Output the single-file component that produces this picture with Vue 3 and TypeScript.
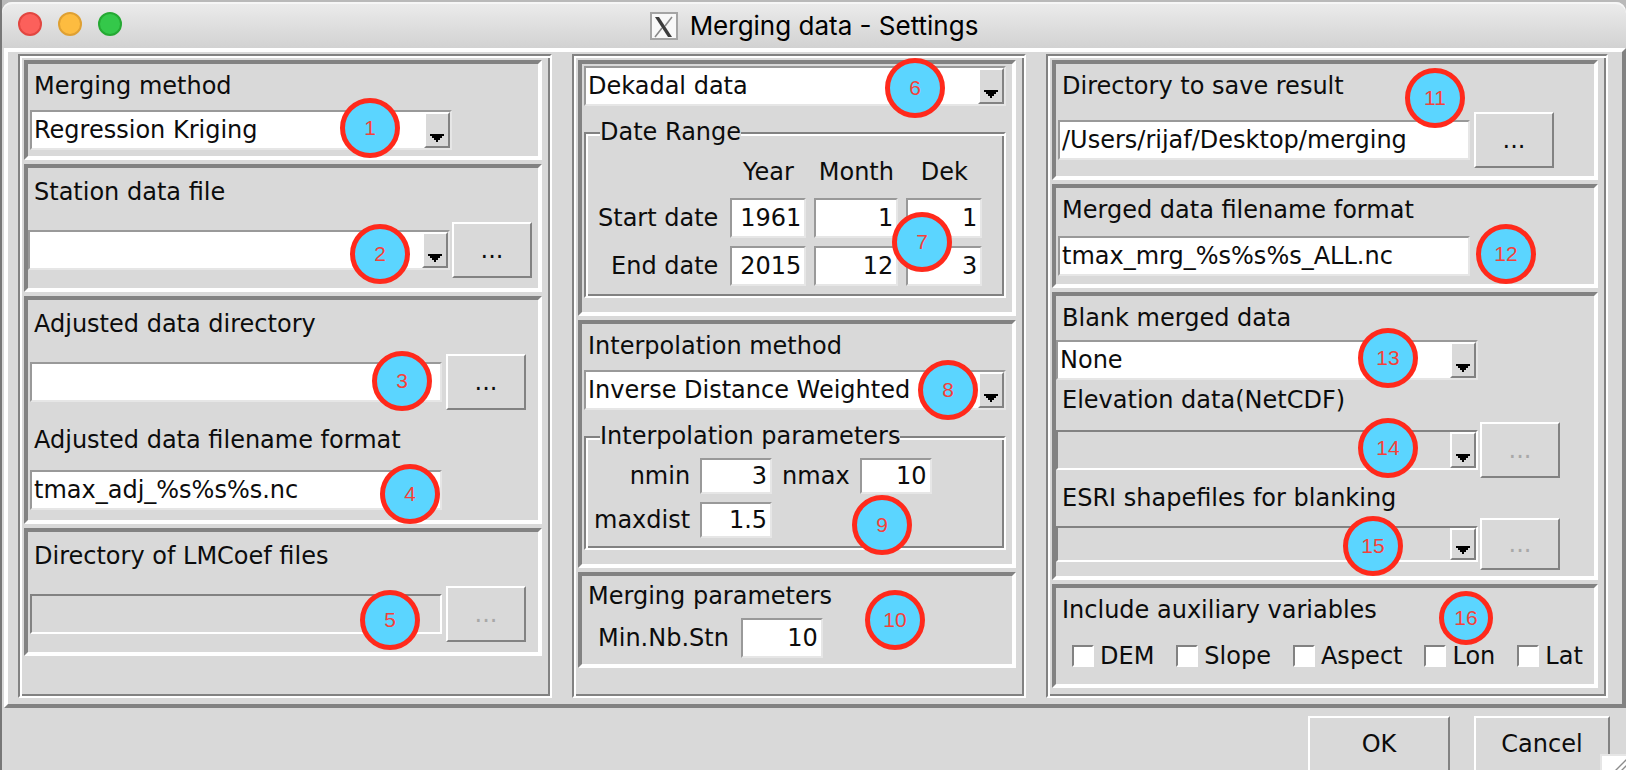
<script setup lang="ts">
import { ref } from 'vue'

interface Marker {
  n: number
  x: number
  y: number
  size?: number
}

const baseWidth = 1626
const mergingMethod = ref('Regression Kriging')
const stationFile = ref('')
const adjustedDir = ref('')
const adjustedFormat = ref('tmax_adj_%s%s%s.nc')
const coefDir = ref('')
const timeStep = ref('Dekadal data')
const interpolation = ref('Inverse Distance Weighted')
const nmin = ref('3')
const nmax = ref('10')
const maxdist = ref('1.5')
const minStations = ref('10')
const resultDir = ref('/Users/rijaf/Desktop/merging')
const mergedFormat = ref('tmax_mrg_%s%s%s_ALL.nc')
const blank = ref('None')

const dates = ref([
  { id: 'start', label: 'Start date', year: '1961', month: '1', dek: '1' },
  { id: 'end', label: 'End date', year: '2015', month: '12', dek: '3' },
])

const auxiliary = ref([
  { name: 'DEM', on: false },
  { name: 'Slope', on: false },
  { name: 'Aspect', on: false },
  { name: 'Lon', on: false },
  { name: 'Lat', on: false },
])

const markers: Marker[] = [
  { n: 1, x: 370, y: 128 },
  { n: 2, x: 380, y: 254 },
  { n: 3, x: 402, y: 381 },
  { n: 4, x: 410, y: 494 },
  { n: 5, x: 390, y: 620 },
  { n: 6, x: 915, y: 88 },
  { n: 7, x: 922, y: 242 },
  { n: 8, x: 948, y: 390 },
  { n: 9, x: 882, y: 525 },
  { n: 10, x: 895, y: 620 },
  { n: 11, x: 1435, y: 98 },
  { n: 12, x: 1506, y: 254 },
  { n: 13, x: 1388, y: 358 },
  { n: 14, x: 1388, y: 448 },
  { n: 15, x: 1373, y: 546 },
  { n: 16, x: 1466, y: 618, size: 54 },
]

const markerStyle = (m: Marker) => ({
  left: `${(m.x / baseWidth) * 100}%`,
  top: `${m.y}px`,
  width: `${m.size ?? 60}px`,
  height: `${m.size ?? 60}px`,
})
</script>

<template>
  <div class="desktop">
    <div class="window">
      <header class="titlebar">
        <div class="lights">
          <button class="light close" type="button" aria-label="Close"></button>
          <button class="light minimize" type="button" aria-label="Minimize"></button>
          <button class="light zoom" type="button" aria-label="Zoom"></button>
        </div>
        <h1 class="title">
          <svg class="x-icon" viewBox="0 0 28 28" aria-hidden="true">
            <rect x="1" y="1" width="26" height="26" fill="#f8f8f8" stroke="#a4a4a4" stroke-width="2" />
            <path d="M22 5 L15 14 M12 16 L5 25" stroke="#8a8a8a" stroke-width="1.6" fill="none" />
            <path d="M5 5 H9 L22 25 H18 Z" fill="#3c3c3c" />
          </svg>
          <span>Merging data - Settings</span>
        </h1>
      </header>

      <main class="body">
        <section class="column">
          <div class="panel p-combo">
            <label class="caption" for="merging-method">Merging method</label>
            <div class="combo">
              <select id="merging-method" v-model="mergingMethod">
                <option>Regression Kriging</option>
              </select>
              <span class="arrow"><svg viewBox="0 0 14 8"><path d="M0 0H14V2H12V4H10V6H8V8H6V6H4V4H2V2H0Z" /></svg></span>
            </div>
          </div>

          <div class="panel p-file">
            <label class="caption" for="station-file">Station data file</label>
            <div class="row tight end-6">
              <div class="combo">
                <select id="station-file" v-model="stationFile"><option value=""></option></select>
                <span class="arrow"><svg viewBox="0 0 14 8"><path d="M0 0H14V2H12V4H10V6H8V8H6V6H4V4H2V2H0Z" /></svg></span>
              </div>
              <button class="browse" type="button" aria-label="Browse station data file">...</button>
            </div>
          </div>

          <div class="panel p-file">
            <label class="caption" for="adjusted-dir">Adjusted data directory</label>
            <div class="row inset-2 end-12">
              <input id="adjusted-dir" v-model="adjustedDir" class="entry" type="text" />
              <button class="browse" type="button" aria-label="Browse adjusted data directory">...</button>
            </div>
            <label class="caption second" for="adjusted-format">Adjusted data filename format</label>
            <div class="row inset-2 end-96">
              <input id="adjusted-format" v-model="adjustedFormat" class="entry" type="text" />
            </div>
          </div>

          <div class="panel p-file">
            <label class="caption" for="coef-dir">Directory of LMCoef files</label>
            <div class="row inset-2 end-12">
              <input id="coef-dir" v-model="coefDir" class="entry" type="text" disabled />
              <button class="browse" type="button" disabled aria-label="Browse LMCoef directory">...</button>
            </div>
          </div>
        </section>

        <section class="column">
          <div class="panel p-dates">
            <div class="combo full">
              <select v-model="timeStep" aria-label="Time step"><option>Dekadal data</option></select>
              <span class="arrow"><svg viewBox="0 0 14 8"><path d="M0 0H14V2H12V4H10V6H8V8H6V6H4V4H2V2H0Z" /></svg></span>
            </div>
            <fieldset class="group">
              <legend>Date Range</legend>
              <table class="dates">
                <thead>
                  <tr>
                    <td></td>
                    <th scope="col">Year</th>
                    <th scope="col">Month</th>
                    <th scope="col">Dek</th>
                  </tr>
                </thead>
                <tbody>
                  <tr v-for="d in dates" :key="d.id">
                    <th scope="row">{{ d.label }}</th>
                    <td><input v-model="d.year" class="entry num w-76" type="text" :aria-label="`${d.label} year`" /></td>
                    <td><input v-model="d.month" class="entry num w-84" type="text" :aria-label="`${d.label} month`" /></td>
                    <td><input v-model="d.dek" class="entry num w-76" type="text" :aria-label="`${d.label} dek`" /></td>
                  </tr>
                </tbody>
              </table>
            </fieldset>
          </div>

          <div class="panel p-interp">
            <label class="caption" for="interpolation">Interpolation method</label>
            <div class="combo full">
              <select id="interpolation" v-model="interpolation"><option>Inverse Distance Weighted</option></select>
              <span class="arrow"><svg viewBox="0 0 14 8"><path d="M0 0H14V2H12V4H10V6H8V8H6V6H4V4H2V2H0Z" /></svg></span>
            </div>
            <fieldset class="group">
              <legend>Interpolation parameters</legend>
              <div class="params">
                <label for="nmin">nmin</label>
                <input id="nmin" v-model="nmin" class="entry num low" type="text" />
                <label for="nmax">nmax</label>
                <input id="nmax" v-model="nmax" class="entry num low" type="text" />
                <label for="maxdist">maxdist</label>
                <input id="maxdist" v-model="maxdist" class="entry num low" type="text" />
              </div>
            </fieldset>
          </div>

          <div class="panel p-merge">
            <h2 class="caption">Merging parameters</h2>
            <div class="stations">
              <label for="min-stations">Min.Nb.Stn</label>
              <input id="min-stations" v-model="minStations" class="entry num w-82" type="text" />
            </div>
          </div>
        </section>

        <section class="column">
          <div class="panel p-save">
            <label class="caption" for="result-dir">Directory to save result</label>
            <div class="row inset-2 end-40">
              <input id="result-dir" v-model="resultDir" class="entry" type="text" />
              <button class="browse" type="button" aria-label="Browse result directory">...</button>
            </div>
          </div>

          <div class="panel p-save">
            <label class="caption" for="merged-format">Merged data filename format</label>
            <div class="row inset-2 end-124">
              <input id="merged-format" v-model="mergedFormat" class="entry" type="text" />
            </div>
          </div>

          <div class="panel p-blank">
            <label class="caption" for="blank">Blank merged data</label>
            <div class="row end-116">
              <div class="combo">
                <select id="blank" v-model="blank"><option>None</option></select>
                <span class="arrow"><svg viewBox="0 0 14 8"><path d="M0 0H14V2H12V4H10V6H8V8H6V6H4V4H2V2H0Z" /></svg></span>
              </div>
            </div>
            <label class="caption" for="elevation">Elevation data(NetCDF)</label>
            <div class="row tight end-34">
              <div class="combo off">
                <select id="elevation" disabled><option></option></select>
                <span class="arrow"><svg viewBox="0 0 14 8"><path d="M0 0H14V2H12V4H10V6H8V8H6V6H4V4H2V2H0Z" /></svg></span>
              </div>
              <button class="browse" type="button" disabled aria-label="Browse elevation data">...</button>
            </div>
            <label class="caption" for="shapefile">ESRI shapefiles for blanking</label>
            <div class="row tight end-34 squat">
              <div class="combo off">
                <select id="shapefile" disabled><option></option></select>
                <span class="arrow"><svg viewBox="0 0 14 8"><path d="M0 0H14V2H12V4H10V6H8V8H6V6H4V4H2V2H0Z" /></svg></span>
              </div>
              <button class="browse" type="button" disabled aria-label="Browse shapefiles">...</button>
            </div>
          </div>

          <div class="panel p-aux">
            <h2 class="caption">Include auxiliary variables</h2>
            <div class="checks">
              <label v-for="a in auxiliary" :key="a.name" class="check">
                <input v-model="a.on" type="checkbox" />
                <span>{{ a.name }}</span>
              </label>
            </div>
          </div>
        </section>
      </main>

      <footer class="actions">
        <button class="action ok" type="button">OK</button>
        <button class="action cancel" type="button">Cancel</button>
      </footer>
    </div>

    <svg class="grip" viewBox="0 0 26 16" aria-hidden="true">
      <rect width="26" height="16" fill="#e6e6e6" />
      <rect x="2" y="2" width="24" height="14" fill="#fff" />
      <path d="M14 18 L28 4 M20 18 L28 10" stroke="#8c8c8c" stroke-width="1.4" />
    </svg>

    <span v-for="m in markers" :key="m.n" class="marker" :style="markerStyle(m)">{{ m.n }}</span>
  </div>
</template>

<style>
html,
body {
  margin: 0;
  background: #b9b9b9;
}
</style>

<style scoped>
.desktop,
.desktop * {
  box-sizing: border-box;
}

.desktop {
  --face: #d9d9d9;
  --dark: #828282;
  --light: #ffffff;
  position: relative;
  height: 100vh;
  padding: 2px 0 0 2px;
  overflow: hidden;
  background: linear-gradient(90deg, #777 2px, #b9b9b9 2px);
  color: #0c0c0c;
  font-family: 'DejaVu Sans', sans-serif;
  font-size: 24px;
  line-height: 28px;
}

.window {
  background: var(--face);
  border-radius: 10px 10px 0 0;
  min-height: 100%;
}

button,
input,
select {
  margin: 0;
  border-radius: 0;
  color: inherit;
  font: inherit;
}

/* Title bar */
.titlebar {
  display: grid;
  grid-template-columns: 1fr auto 1fr;
  align-items: start;
  height: 46px;
  padding-top: 10px;
  border-radius: 10px 10px 0 0;
  background: linear-gradient(#ececec, #d2d2d2);
  box-shadow: inset 0 2px #f6f6f6;
}

.lights {
  display: flex;
  gap: 16px;
  padding-left: 16px;
}

.light {
  width: 24px;
  height: 24px;
  padding: 0;
  border: 2px solid;
  border-radius: 50%;
}

.close {
  background: #fc605b;
  border-color: #e24640;
}

.minimize {
  background: #fdbc40;
  border-color: #dfa032;
}

.zoom {
  background: #34c84a;
  border-color: #25a933;
}

.title {
  display: flex;
  align-items: center;
  gap: 12px;
  margin: 0;
  color: #000;
  font-family: Inter, sans-serif;
  font-size: 26px;
  font-weight: 400;
  line-height: 28px;
}

.x-icon {
  width: 28px;
  height: 28px;
}

/* Three-column body */
.body {
  display: grid;
  grid-template-columns: minmax(0, 534fr) minmax(0, 454fr) minmax(0, 562fr);
  gap: 20px;
  margin-left: 2px;
  padding: 2px 14px 6px 10px;
  border: 4px solid;
  border-color: var(--light) var(--dark) var(--dark) var(--light);
}

.column {
  display: flex;
  flex-direction: column;
  gap: 4px;
  padding: 4px 8px 8px 4px;
  border: 2px solid;
  border-color: var(--dark) var(--light) var(--light) var(--dark);
  box-shadow: inset 2px 2px var(--light), inset -2px -2px var(--dark);
}

.panel {
  border: 4px solid;
  border-color: var(--dark) var(--light) var(--light) var(--dark);
}

.caption {
  display: block;
  margin: 0;
  padding-left: 6px;
  font-size: 24px;
  font-weight: 400;
  white-space: nowrap;
}

.p-combo {
  padding: 8px 0 6px;
}

.p-combo .combo {
  margin: 10px 86px 0 2px;
}

.p-file {
  padding: 10px 0;
}

.p-file .row {
  margin-top: 16px;
}

.p-file .second {
  margin-top: 16px;
}

.p-dates {
  padding: 2px 0 14px;
}

.p-interp {
  padding: 8px 0 14px;
}

.p-interp .combo {
  margin-top: 10px;
}

.full {
  margin: 0 6px 0 2px;
}

.p-merge {
  padding: 6px 0;
}

.p-save {
  padding: 8px 0;
}

.p-save .row {
  margin-top: 12px;
}

.p-blank {
  padding: 8px 0 6px;
}

.p-blank .row {
  margin: 8px 0 6px;
}

.p-blank .squat {
  margin: 6px 0 0;
}

.p-aux {
  padding: 8px 0 14px;
}

/* Controls */
.row {
  display: flex;
  align-items: center;
  gap: 4px;
}

.tight {
  gap: 2px;
}

.inset-2 {
  padding-left: 2px;
}

.end-6 {
  padding-right: 6px;
}

.end-12 {
  padding-right: 12px;
}

.end-34 {
  padding-right: 34px;
}

.end-40 {
  padding-right: 40px;
}

.end-96 {
  padding-right: 96px;
}

.end-116 {
  padding-right: 116px;
}

.end-124 {
  padding-right: 124px;
}

.entry {
  flex: 1;
  min-width: 0;
  height: 40px;
  padding: 0 2px;
  border: 2px solid;
  border-color: #999 #e6e6e6 #e6e6e6 #999;
  background: #fff;
  outline: none;
}

.entry:disabled {
  border-color: var(--dark) var(--light) var(--light) var(--dark);
  background: var(--face);
}

.num {
  flex: none;
  padding: 0 3px 0 2px;
  text-align: right;
}

.low {
  width: 72px;
  height: 36px;
}

.w-76 {
  width: 76px;
}

.w-82 {
  width: 82px;
}

.w-84 {
  width: 84px;
}

.combo {
  display: grid;
  flex: 1;
  min-width: 0;
  height: 40px;
  border: 2px solid;
  border-color: #999 #e6e6e6 #e6e6e6 #999;
  background: #fff;
}

.combo select {
  grid-area: 1 / 1;
  appearance: none;
  width: 100%;
  padding: 0 26px 0 2px;
  border: 0;
  background: transparent;
  outline: none;
}

.arrow {
  grid-area: 1 / 1;
  justify-self: end;
  display: flex;
  align-items: flex-end;
  justify-content: center;
  width: 26px;
  padding-bottom: 4px;
  border: 2px solid;
  border-color: var(--light) var(--dark) var(--dark) var(--light);
  background: var(--face);
  pointer-events: none;
}

.arrow svg {
  width: 14px;
  height: 8px;
  fill: #000;
}

.off {
  border-color: var(--dark) var(--light) var(--light) var(--dark);
  background: var(--face);
}

.browse,
.action {
  border: 2px solid;
  border-color: var(--light) var(--dark) var(--dark) var(--light);
  background: var(--face);
}

.browse {
  flex: none;
  width: 80px;
  height: 56px;
  padding: 0;
}

.browse:disabled {
  color: #a8a8a8;
}

.squat .combo {
  height: 36px;
}

.squat .browse {
  height: 52px;
}

/* Grouped fields */
.group {
  min-width: 0;
  margin: 12px 6px 0 2px;
  padding: 0 2px 10px;
  border: 2px solid;
  border-color: var(--dark) var(--light) var(--light) var(--dark);
  box-shadow: inset 2px 2px var(--light), inset -2px -2px var(--dark);
}

.group legend {
  margin-left: 12px;
  padding: 0 0 2px;
  background: var(--face);
}

.dates {
  margin: 10px 0 0 10px;
  border-collapse: collapse;
}

.dates th,
.dates td {
  padding: 0 8px 0 0;
  font-weight: 400;
}

.dates thead th {
  padding-bottom: 12px;
}

.dates tbody th {
  padding-right: 12px;
  text-align: right;
  white-space: nowrap;
}

.dates tbody tr + tr > * {
  padding-top: 8px;
}

.dates .entry {
  display: block;
}

.params {
  display: grid;
  grid-template-columns: auto auto auto auto;
  justify-content: start;
  align-items: center;
  gap: 8px 10px;
  margin: 6px 0 0 6px;
}

.params label {
  text-align: right;
}

.stations {
  display: flex;
  align-items: center;
  gap: 12px;
  margin-top: 8px;
  padding-left: 16px;
}

.checks {
  display: flex;
  gap: 22px;
  margin-top: 18px;
  padding-left: 16px;
}

.check {
  display: flex;
  align-items: center;
  gap: 6px;
}

.check input {
  appearance: none;
  width: 22px;
  height: 22px;
  border: 2px solid;
  border-color: var(--dark) var(--light) var(--light) var(--dark);
  background: #fff;
}

.check input:checked {
  background: #333;
}

/* Footer */
.actions {
  display: flex;
  justify-content: flex-end;
  gap: 24px;
  padding: 8px 16px 0;
}

.action {
  width: 136px;
  height: 56px;
  padding: 0;
}

.ok {
  width: 142px;
}

.grip {
  position: absolute;
  right: 0;
  bottom: 0;
  width: 26px;
  height: 16px;
}

/* Numbered callouts laid over the dialog */
.marker {
  position: absolute;
  display: flex;
  align-items: center;
  justify-content: center;
  transform: translate(-50%, -50%);
  border: 5px solid #ff2a1c;
  border-radius: 50%;
  background: #5bd5ff;
  color: #f5413a;
  font-family: 'Liberation Sans', Arial, sans-serif;
  font-size: 21px;
  pointer-events: none;
}
</style>
